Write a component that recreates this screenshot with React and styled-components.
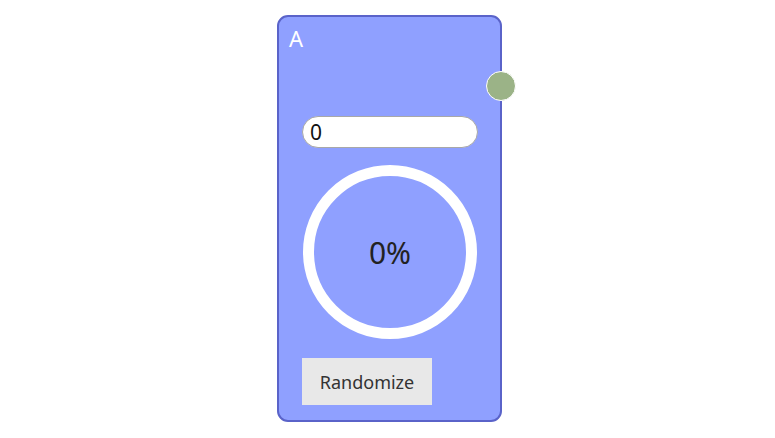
import React from 'react';
import styled, { createGlobalStyle } from 'styled-components';

const GlobalStyle = createGlobalStyle`
  html, body {
    margin: 0;
    padding: 0;
    background: #ffffff;
    font-family: "Noto Sans", "Open Sans", sans-serif;
  }
`;

const Page = styled.div`
  width: 775px;
  height: 438px;
  display: flex;
  justify-content: center;
  align-items: center;
`;

const Node = styled.div`
  position: relative;
  box-sizing: border-box;
  width: 225px;
  height: 407px;
  margin-left: 4px;
  margin-top: -1px;
  background: #8fa0ff;
  border: 2px solid #5a63c9;
  border-radius: 11px;
  display: flex;
  flex-direction: column;
`;

const Title = styled.div`
  padding: 9px 10px 0;
  height: 24px;
  font-size: 22px;
  line-height: 24px;
  color: #ffffff;
`;

const Handle = styled.div`
  position: absolute;
  right: -16px;
  top: 54px;
  width: 28px;
  height: 28px;
  border-radius: 50%;
  background: #9bb387;
  border: 1.5px solid #ffffff;
`;

const Body = styled.div`
  display: flex;
  flex-direction: column;
  align-items: flex-start;
  padding: 0 22px 0 23px;
`;

const Field = styled.input`
  box-sizing: border-box;
  margin-top: 66px;
  width: 176px;
  height: 32px;
  border: 1px solid #a8a8a8;
  border-radius: 16px;
  background: #ffffff;
  padding: 0 7px;
  font-family: "Noto Sans", sans-serif;
  font-size: 21px;
  color: #111;
  outline: none;
`;

const Ring = styled.div`
  box-sizing: border-box;
  margin: 17px 0 0 1px;
  width: 174px;
  height: 174px;
  border-radius: 50%;
  border: 11px solid #ffffff;
  display: flex;
  align-items: center;
  justify-content: center;
  font-size: 30px;
  color: #222222;
`;

const Button = styled.button`
  margin-top: 19px;
  width: 130px;
  height: 47px;
  border: none;
  background: #e8e8e8;
  font-family: "Noto Sans", sans-serif;
  font-size: 18px;
  color: #333333;
  cursor: pointer;
`;

export default function App() {
  return (
    <Page>
      <GlobalStyle />
      <Node>
        <Title>A</Title>
        <Handle />
        <Body>
          <Field defaultValue="0" />
          <Ring>0%</Ring>
          <Button>Randomize</Button>
        </Body>
      </Node>
    </Page>
  );
}
